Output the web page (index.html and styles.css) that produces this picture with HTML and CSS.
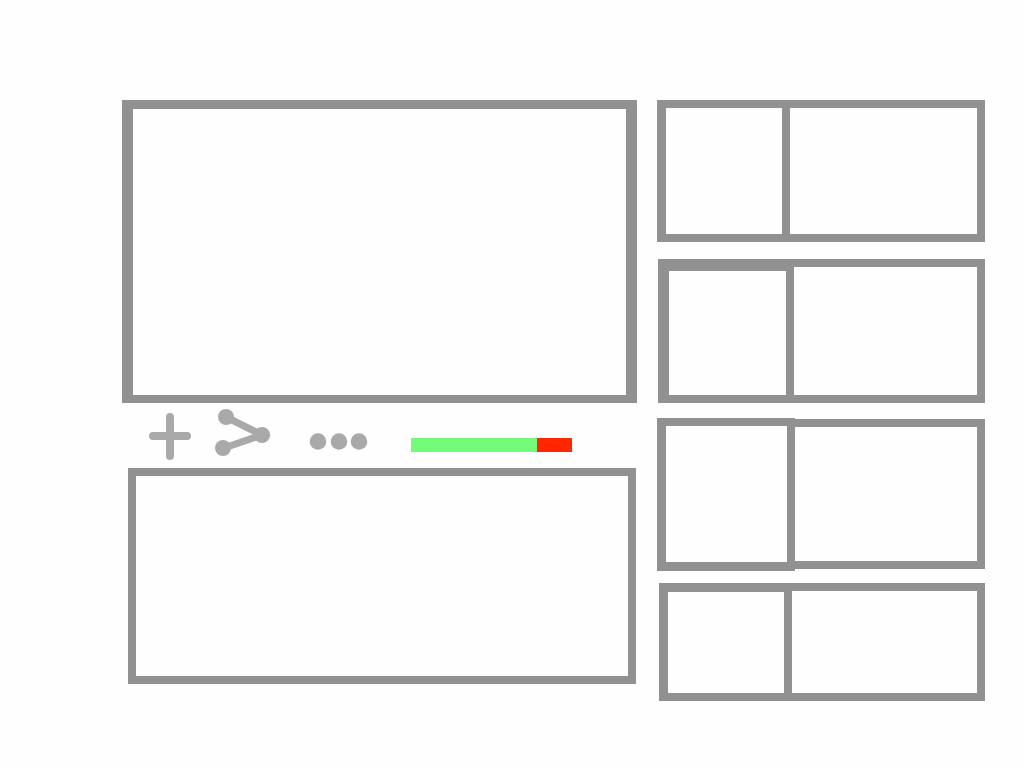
FILE: index.html
```html
<!DOCTYPE html>
<html lang="en">
<head>
    <meta charset="UTF-8">
    <meta name="viewport" content="width=device-width, initial-scale=1.0">
    <title>Video page wireframe</title>
    <link rel="stylesheet" href="styles.css">
</head>
<body>
    <div class="page">
        <main class="main">
            <section class="player" aria-label="Video player"></section>

            <div class="actions">
                <button class="action" type="button" aria-label="Add">
                    <svg width="42" height="65" viewBox="0 0 42 65">
                        <path class="line" d="M21 14V53M4 33H38"/>
                    </svg>
                </button>
                <button class="action" type="button" aria-label="Share">
                    <svg width="56" height="65" viewBox="0 0 56 65">
                        <path class="line thin" d="M11 14L47 32L9 45"/>
                        <circle cx="11" cy="14" r="8"/>
                        <circle cx="47" cy="32" r="8"/>
                        <circle cx="8" cy="45" r="8"/>
                    </svg>
                </button>
                <button class="action more" type="button" aria-label="More">
                    <svg width="60" height="65" viewBox="0 0 60 65">
                        <circle cx="9" cy="38.5" r="8.3"/>
                        <circle cx="30" cy="38.5" r="8.3"/>
                        <circle cx="50" cy="38.5" r="8.3"/>
                    </svg>
                </button>
                <div class="rating" role="img" aria-label="Likes and dislikes">
                    <span class="likes" style="width: 78%"></span>
                </div>
            </div>

            <section class="comments" aria-label="Comments"></section>
        </main>

        <aside class="sidebar" aria-label="Related videos">
            <article class="card">
                <div class="thumb"></div>
                <div class="info"></div>
            </article>
            <article class="card card-heavy">
                <div class="thumb"></div>
                <div class="info"></div>
            </article>
            <article class="card card-tall">
                <div class="thumb"></div>
                <div class="info"></div>
            </article>
            <article class="card card-short">
                <div class="thumb"></div>
                <div class="info"></div>
            </article>
        </aside>
    </div>
</body>
</html>
```
FILE: styles.css
```css
* {
    box-sizing: border-box;
}
body {
    margin: 0;
    background: #fefefe;
    font-family: "Liberation Sans", Arial, sans-serif;
}
.page {
    display: grid;
    grid-template-columns: 515fr 328fr;
    align-items: start;
    gap: 20px;
    padding: 100px 39px 60px 122px;
}

/* main column */
.player {
    min-height: 303px;
    border: 11px solid #919191;
    border-top-width: 9px;
    border-bottom-width: 8px;
}
.actions {
    display: flex;
    align-items: center;
    gap: 24px;
    padding-left: 27px;
}
.action {
    padding: 0;
    border: none;
    background: none;
    cursor: pointer;
}
.action svg {
    display: block;
    fill: #a9a9a9;
}
.line {
    fill: none;
    stroke: #a9a9a9;
    stroke-width: 8;
    stroke-linecap: round;
}
.thin {
    stroke-width: 7;
}
.more {
    margin-left: 14px;
}
.rating {
    display: flex;
    width: 161px;
    height: 14px;
    margin-top: 18px;
    margin-left: 18px;
    background: #ff2600;
}
.likes {
    background: #73fa79;
}
.comments {
    min-height: 216px;
    margin-left: 6px;
    margin-right: 1px;
    border: 8px solid #919191;
}

/* related videos */
.card {
    display: flex;
    min-height: 142px;
    margin-bottom: 17px;
}
.thumb {
    flex: 0 0 133px;
    border: 8px solid #919191;
    border-left-width: 9px;
}
.info {
    flex: 1;
    border: 8px solid #919191;
    border-left: none;
}
.card-heavy {
    min-height: 144px;
    margin-left: 1px;
    margin-bottom: 15px;
}
.card-heavy .thumb {
    flex-basis: 136px;
    border-top-width: 12px;
    border-left-width: 11px;
}
.card-tall {
    min-height: 153px;
    margin-bottom: 12px;
}
.card-tall .thumb {
    flex-basis: 138px;
    border-bottom-width: 9px;
}
.card-tall .info {
    margin: 1px 0 2px;
}
.card-short {
    min-height: 118px;
    margin-left: 2px;
    margin-bottom: 0;
}
.card-short .thumb {
    flex-basis: 133px;
    border-top-width: 9px;
}

@media (max-width: 800px) {
    .page {
        grid-template-columns: 1fr;
        padding: 24px;
    }
    .actions {
        flex-wrap: wrap;
    }
}
```
